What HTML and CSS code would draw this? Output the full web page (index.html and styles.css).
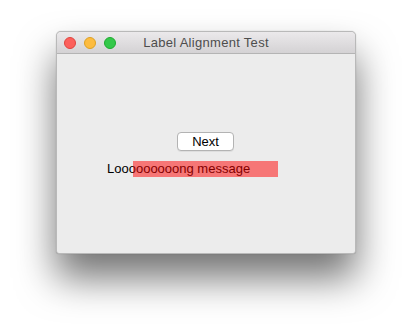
FILE: index.html
```html
<!DOCTYPE html>
<html>
<head>
<meta charset="utf-8">
<link rel="stylesheet" href="styles.css">
</head>
<body>
<div class="window">
  <div class="titlebar">
    <div class="lights">
      <span class="light red"></span>
      <span class="light yellow"></span>
      <span class="light green"></span>
    </div>
    <div class="title">Label Alignment Test</div>
    <div></div>
  </div>
  <div class="content">
    <button class="btn">Next</button>
    <div class="label-row">
      <div class="label">Looooooooong message<span class="overlay"></span></div>
    </div>
  </div>
</div>
</body>
</html>
```
FILE: styles.css
```css
html, body {
  margin: 0;
  background: #ffffff;
}
html {
  height: 100%;
}
body {
  min-height: 100%;
  box-sizing: border-box;
  padding: 31px 0 0 56px;
  font-family: "Liberation Sans", Arial, sans-serif;
}
.window {
  width: 300px;
  height: 223px;
  box-sizing: border-box;
  border: 1px solid #b9b9b9;
  border-radius: 5px 5px 3px 3px;
  background: #ececec;
  box-shadow: 0 24px 38px rgba(0,0,0,0.55), 0 0 1px rgba(0,0,0,0.3);
  overflow: hidden;
  display: flex;
  flex-direction: column;
}
.titlebar {
  height: 22px;
  box-sizing: border-box;
  border-bottom: 1px solid #b4b4b4;
  background: linear-gradient(#ebe9eb, #d4d2d4);
  display: grid;
  grid-template-columns: 1fr auto 1fr;
  align-items: center;
}
.lights {
  display: flex;
  gap: 8px;
  padding-left: 7px;
}
.light {
  width: 12px;
  height: 12px;
  box-sizing: border-box;
  border-radius: 50%;
}
.red { background: #fc605c; border: 1px solid #e0443e; }
.yellow { background: #fdbc40; border: 1px solid #dea123; }
.green { background: #34c84a; border: 1px solid #1eab2f; }
.title {
  font-size: 13px;
  letter-spacing: 0.3px;
  color: #4d4d4d;
  line-height: 16px;
  padding-top: 1px;
}
.content {
  flex: 1;
  display: flex;
  flex-direction: column;
  padding-top: 78px;
}
.btn {
  align-self: center;
  margin-left: -1px;
  width: 57px;
  height: 19px;
  padding: 0;
  box-sizing: border-box;
  background: #ffffff;
  border: 1px solid #b3b3b3;
  border-radius: 4px;
  box-shadow: 0 1px 0 rgba(0,0,0,0.06);
  font-family: "Liberation Sans", Arial, sans-serif;
  font-size: 13px;
  color: #000;
  line-height: 17px;
}
.label-row {
  display: flex;
  padding-left: 50px;
  margin-top: 10px;
}
.label {
  position: relative;
  font-size: 13px;
  line-height: 16px;
  color: #000;
}
.overlay {
  position: absolute;
  left: 26px;
  top: 0;
  width: 145px;
  height: 16px;
  background: rgba(255, 0, 0, 0.5);
}
```
